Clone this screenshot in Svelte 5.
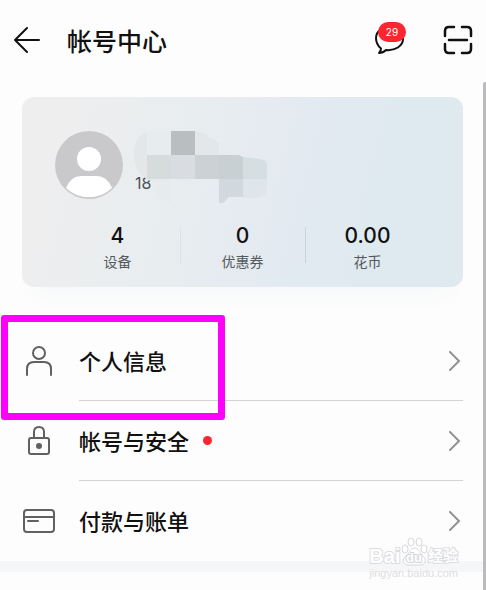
<script>
  let unread = 29;
  let account = "18";

  const stats = [
    { value: "4", label: "设备" },
    { value: "0", label: "优惠券" },
    { value: "0.00", label: "花币" },
  ];

  const items = [
    { icon: "user", label: "个人信息", marked: true },
    { icon: "lock", label: "帐号与安全", dot: true },
    { icon: "card", label: "付款与账单" },
  ];
</script>

<div class="page">
  <header>
    <button class="icon-button" aria-label="返回">
      <svg width="28" height="28" viewBox="0 0 28 28">
        <path d="M26 14H2M14 2L2 14l12 12" />
      </svg>
    </button>
    <h1>帐号中心</h1>
    <button class="icon-button messages" aria-label="消息">
      <svg width="30" height="30" viewBox="0 0 30 30">
        <path
          d="M15 2C8 2 1 6 1 13c0 5 2 8 5 10.500c0 2-1 3-2 4.500c3 0 5-1 7-3c9 1 17-4 17-11C28 6 22 2 15 2z"
        />
      </svg>
      <span class="badge">{unread}</span>
    </button>
    <button class="icon-button" aria-label="扫一扫">
      <svg class="scan" width="30" height="30" viewBox="0 0 30 30">
        <path
          d="M2 11V6q0-4 4-4h5M19 2h5q4 0 4 4v5M28 19v5q0 4-4 4h-5M11 28H6q-4 0-4-4v-5M6 15h18"
        />
      </svg>
    </button>
  </header>

  <section class="card">
    <div class="profile">
      <svg width="68" height="68" viewBox="0 0 68 68">
        <circle cx="34" cy="34" r="34" fill="#c9c9cb" />
        <circle cx="34" cy="28" r="12" fill="#fff" />
        <path d="M11 57q5-12 15-12h16q10 0 15 12a33 33 0 0 1-46 0z" fill="#fff" />
      </svg>
      <span class="account">{account}</span>
      <svg class="mosaic" width="134" height="73" viewBox="0 0 134 73">
        <path d="M13 1Q0 5 0 23q0 18 13 25z" fill="#e3e7e9" />
        <path d="M13 24H1q0 16 12 24z" fill="#e5e6e7" />
        <path d="M13 1q12-3 24 0v23H13z" fill="#e7ecee" />
        <path d="M37 0h24v24H37z" fill="#b9bec1" />
        <path d="M61 0q9 1 15 7l9 5v12H61z" fill="#e3e7ea" />
        <path d="M13 24h24v24H13z" fill="#d6dbdb" />
        <path d="M37 24h24v24H37z" fill="#d9dde2" />
        <path d="M61 24h24v24H61z" fill="#ccd2d4" />
        <path d="M85 24h20l4 2v22H85z" fill="#c9d0d3" />
        <path d="M109 26l17 2q7 2 7 6v14h-24z" fill="#d5dee1" />
        <path d="M12 48h25v24q-8 0-13-9l-5-12z" fill="#e7ebed" />
        <path d="M85 48h24v18H95l-6 6h-4z" fill="#d2d9de" />
        <path d="M109 48h24v15q-6 5-24 4z" fill="#dfe6ea" />
      </svg>
    </div>
    <div class="stats">
      {#each stats as stat}
        <div class="stat">
          <strong>{stat.value}</strong>
          <span>{stat.label}</span>
        </div>
      {/each}
    </div>
  </section>

  <ul class="menu">
    {#each items as item}
      <li class:marked={item.marked}>
        <a href="#{item.icon}">
          <svg class="item-icon" width="34" height="34" viewBox="0 0 34 34">
            {#if item.icon === "user"}
              <circle cx="17" cy="9" r="6" />
              <path d="M5 31v-6q0-7 7-7h10q7 0 7 7v6" />
            {:else if item.icon === "lock"}
              <rect x="7" y="14" width="20" height="16" rx="2" />
              <path d="M12 14V8q0-5 5-5t5 5v6" />
              <circle class="solid" cx="17" cy="22" r="3" />
            {:else}
              <rect x="2" y="6" width="30" height="22" rx="3" />
              <path d="M2 13h30M6 17h10" />
            {/if}
          </svg>
          <span class="line">
            <span class="label">{item.label}</span>
            {#if item.dot}<span class="dot"></span>{/if}
            <svg class="chevron" width="12" height="20" viewBox="0 0 12 20">
              <path d="M1 1l9 9-9 9" />
            </svg>
          </span>
        </a>
      </li>
    {/each}
  </ul>

  <div class="band"></div>
  <div class="scrollbar"></div>

  <div class="watermark">
    <div class="brand">
      <span>Bai</span>
      <svg width="27" height="29" viewBox="0 0 27 29">
        <ellipse cx="4" cy="12" rx="3" ry="4" />
        <ellipse cx="10" cy="5" rx="3" ry="4" />
        <ellipse cx="18" cy="5" rx="3" ry="4" />
        <ellipse cx="23" cy="12" rx="3" ry="4" />
        <path d="M13 11c4 0 5 4 8 7c6 5 3 10-2 10H7c-5 0-7-6-1-10c3-3 4-7 7-7z" />
        <text x="13" y="25" text-anchor="middle">du</text>
      </svg>
      <span class="cn">经验</span>
    </div>
    <div class="site">jingyan.baidu.com</div>
  </div>
</div>

<style>
  :global(body) {
    margin: 0;
    background: #fefdfe;
  }

  .page {
    position: relative;
    min-height: 100vh;
    box-sizing: border-box;
    overflow: hidden;
    color: #111;
    font-family: "Noto Sans CJK SC", sans-serif;
  }

  header {
    display: flex;
    align-items: center;
    height: 80px;
    padding: 0 13px;
  }

  h1 {
    flex: 1;
    margin: 0 0 0 26px;
    font-size: 25px;
    line-height: 36px;
    font-weight: 500;
  }

  .icon-button {
    position: relative;
    display: flex;
    padding: 0;
    border: 0;
    background: none;
  }

  .icon-button svg {
    fill: none;
    stroke: #111;
    stroke-width: 2;
    stroke-linecap: round;
    stroke-linejoin: round;
  }

  .icon-button .scan {
    stroke-width: 2.5;
  }

  .messages {
    margin-right: 38px;
  }

  .badge {
    position: absolute;
    top: -3px;
    left: 3px;
    width: 28px;
    border-radius: 10px;
    background: #fc2631;
    color: #fff;
    font: 10px/20px Inter, sans-serif;
    text-align: center;
  }

  .card {
    margin: 17px 23px 0 22px;
    padding: 34px 33px 14px;
    border-radius: 12px;
    background: linear-gradient(105deg, #eeeeef 10%, #e8edef 36%, #e3eaf1 60%, #dfeaf0 78%);
    box-shadow: 0 22px 24px -14px #f5f8f8;
  }

  .profile {
    position: relative;
    display: flex;
    align-items: flex-end;
    gap: 12px;
  }

  .account {
    color: #4d5257;
    font: 16px/20px Inter, sans-serif;
    padding-bottom: 6px;
  }

  .mosaic {
    position: absolute;
    top: 0;
    left: 79px;
  }

  .stats {
    display: grid;
    grid-template-columns: repeat(3, 1fr);
    margin-top: 24px;
  }

  .stat {
    position: relative;
    display: flex;
    flex-direction: column;
    align-items: center;
    height: 50px;
  }

  .stat + .stat::before {
    content: "";
    position: absolute;
    left: 0;
    top: 4px;
    width: 1px;
    height: 36px;
    background: #dde2e6;
  }

  .stat:last-child::before {
    background: #cbd2da;
  }

  .stat strong {
    font: 500 21px/26px Inter, sans-serif;
  }

  .stat span {
    color: #55595d;
    font-size: 14px;
    line-height: 24px;
  }

  .menu {
    list-style: none;
    margin: 34px 23px 0 22px;
    padding: 0;
  }

  .menu li {
    position: relative;
  }

  .marked::after {
    content: "";
    position: absolute;
    top: -6px;
    left: -21px;
    width: 210px;
    height: 91px;
    border: 7px solid #ff00ff;
    border-radius: 3px;
    pointer-events: none;
  }

  .menu a {
    display: flex;
    align-items: center;
    gap: 23px;
    color: inherit;
    text-decoration: none;
  }

  .item-icon {
    fill: none;
    stroke: #616161;
    stroke-width: 2;
    stroke-linecap: round;
  }

  .item-icon .solid {
    fill: #616161;
    stroke: none;
  }

  .line {
    flex: 1;
    display: flex;
    align-items: center;
    height: 80px;
    box-sizing: border-box;
    border-bottom: 1px solid #d3d3d5;
    padding-right: 2px;
  }

  li:last-child .line {
    border-bottom: 0;
  }

  .label {
    padding-bottom: 2px;
    font-size: 22px;
    font-weight: 500;
    line-height: 32px;
  }

  .dot {
    width: 9px;
    height: 9px;
    margin-left: 14px;
    border-radius: 50%;
    background: #fc2631;
  }

  .chevron {
    margin-left: auto;
    fill: none;
    stroke: #929292;
    stroke-width: 2;
    stroke-linecap: round;
  }

  .band {
    height: 11px;
    background: #f5f6f8;
  }

  .scrollbar {
    position: absolute;
    top: 82px;
    right: 0;
    bottom: 0;
    width: 3px;
    border-radius: 2px 0 0 0;
    background: #bbbabc;
  }

  .watermark {
    position: absolute;
    right: 28px;
    bottom: 10px;
    color: #fff;
    font-family: "Liberation Sans", "Noto Sans CJK SC", sans-serif;
    -webkit-text-stroke: 2px #dcdde0;
    paint-order: stroke fill;
  }

  .brand {
    display: flex;
    align-items: flex-end;
    justify-content: space-between;
    font-size: 20px;
    line-height: 20px;
    font-weight: bold;
  }

  .brand svg {
    fill: #fff;
    stroke: #d6d7da;
    stroke-width: 1;
    paint-order: normal;
  }

  .brand text {
    font-size: 13px;
    stroke-width: 2;
    paint-order: stroke;
  }

  .brand .cn {
    font-size: 15px;
  }

  .site {
    color: #dedee0;
    font-size: 11px;
    line-height: 14px;
    -webkit-text-stroke: 0;
  }
</style>
